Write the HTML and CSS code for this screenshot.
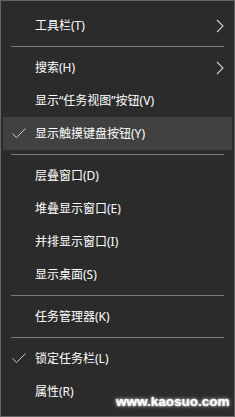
FILE: index.html
```html
<!DOCTYPE html>
<html lang="zh-CN">
<head>
<meta charset="utf-8">
<title>任务栏菜单</title>
<link rel="stylesheet" href="styles.css">
</head>
<body>
<div class="menu">
  <div class="item"><span class="check"></span><span class="label">工具栏(T)</span><svg class="arrow" width="8" height="14" viewBox="0 0 8 14"><polyline points="1,1 7,7 1,13" fill="none" stroke="#d0d0d0" stroke-width="1.1"/></svg></div>
  <div class="sep"></div>
  <div class="item"><span class="check"></span><span class="label">搜索(H)</span><svg class="arrow" width="8" height="14" viewBox="0 0 8 14"><polyline points="1,1 7,7 1,13" fill="none" stroke="#d0d0d0" stroke-width="1.1"/></svg></div>
  <div class="item"><span class="check"></span><span class="label">显示“任务视图”按钮(V)</span></div>
  <div class="item active"><span class="check"><svg width="14" height="11" viewBox="0 0 14 11"><polyline points="0.5,5.5 4.5,9.5 13.5,0.5" fill="none" stroke="#c8c8c8" stroke-width="1"/></svg></span><span class="label">显示触摸键盘按钮(Y)</span></div>
  <div class="sep"></div>
  <div class="item"><span class="check"></span><span class="label">层叠窗口(D)</span></div>
  <div class="item"><span class="check"></span><span class="label">堆叠显示窗口(E)</span></div>
  <div class="item"><span class="check"></span><span class="label">并排显示窗口(I)</span></div>
  <div class="item"><span class="check"></span><span class="label">显示桌面(S)</span></div>
  <div class="sep"></div>
  <div class="item"><span class="check"></span><span class="label">任务管理器(K)</span></div>
  <div class="sep"></div>
  <div class="item"><span class="check"><svg width="14" height="11" viewBox="0 0 14 11"><polyline points="0.5,5.5 4.5,9.5 13.5,0.5" fill="none" stroke="#c8c8c8" stroke-width="1"/></svg></span><span class="label">锁定任务栏(L)</span></div>
  <div class="item"><span class="check"></span><span class="label">属性(R)</span></div>
  <div class="watermark">www.kaosuo.com</div>
</div>
</body>
</html>
```

FILE: styles.css
```css
html, body {
  margin: 0;
  padding: 0;
  background: #2b2b2b;
}

.menu {
  position: relative;
  box-sizing: border-box;
  width: 235px;
  height: 417px;
  padding: 8px 2px;
  background: #2b2b2b;
  border: 1px solid #646464;
  font-family: "Noto Sans", "Noto Sans CJK SC", sans-serif;
  font-size: 12px;
  color: #ffffff;
}

.item {
  display: flex;
  align-items: center;
  height: 33px;
  padding-right: 8px;
}

.item.active {
  background: #414141;
}

.check {
  display: flex;
  align-items: center;
  width: 32px;
  padding-left: 9px;
  box-sizing: border-box;
  height: 100%;
}

.label {
  line-height: 14px;
  white-space: nowrap;
}

.arrow {
  margin-left: auto;
}

.sep {
  height: 1px;
  margin: 4px 8px;
  background: #7a7a7a;
}

.watermark {
  position: absolute;
  left: 115px;
  top: 394px;
  font-family: "Liberation Sans", Arial, sans-serif;
  font-weight: bold;
  font-size: 13.5px;
  line-height: 14px;
  color: #ffffff;
  text-shadow: 0 0 2px #ffffff, 0 0 4px #bbbbbb;
}
```
